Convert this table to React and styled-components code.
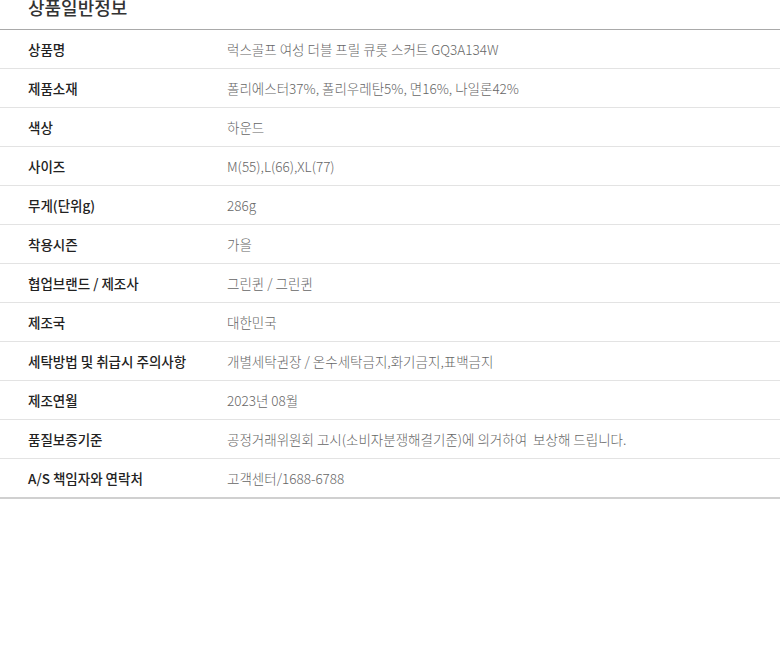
import React from "react"
import styled, { createGlobalStyle } from "styled-components"

const GlobalStyle = createGlobalStyle`
	html, body {
		margin: 0;
		padding: 0;
		background: #fff;
	}
	body {
		font-family: "Noto Sans CJK KR", "Noto Sans", sans-serif;
	}
`

const Wrap = styled.div`
	width: 780px;
	height: 653px;
	overflow: hidden;
	background: #fff;
`

const Title = styled.h3`
	margin: 0;
	height: 29px;
	padding-left: 28px;
	font-size: 18px;
	font-weight: 500;
	line-height: 14px;
	color: #333;
	border-bottom: 1px solid #a9a9a9;
`

const Table = styled.div`
	border-bottom: 2px solid #d0d0d0;
`

const Row = styled.div`
	display: flex;
	align-items: center;
	height: 38px;
	border-top: 1px solid #e3e3e3;
	&:first-child {
		border-top: none;
	}
`

const Label = styled.div`
	width: 199px;
	padding-left: 28px;
	font-size: 13.5px;
	font-weight: 500;
	color: #222;
`

const Value = styled.div`
	flex: 1;
	font-size: 13.5px;
	font-weight: 300;
	color: #666;
	white-space: pre;
`

const rows = [
	["상품명", "럭스골프 여성 더블 프릴 큐롯 스커트 GQ3A134W"],
	["제품소재", "폴리에스터37%, 폴리우레탄5%, 면16%, 나일론42%"],
	["색상", "하운드"],
	["사이즈", "M(55),L(66),XL(77)"],
	["무게(단위g)", "286g"],
	["착용시즌", "가을"],
	["협업브랜드 / 제조사", "그린퀸 / 그린퀸"],
	["제조국", "대한민국"],
	["세탁방법 및 취급시 주의사항", "개별세탁권장 / 온수세탁금지,화기금지,표백금지"],
	["제조연월", "2023년 08월"],
	["품질보증기준", "공정거래위원회 고시(소비자분쟁해결기준)에 의거하여  보상해 드립니다."],
	["A/S 책임자와 연락처", "고객센터/1688-6788"],
]

const App = () => {
	return (
		<>
			<GlobalStyle />
			<Wrap>
				<Title>상품일반정보</Title>
				<Table>
					{rows.map(([label, value]) => (
						<Row key={label}>
							<Label>{label}</Label>
							<Value>{value}</Value>
						</Row>
					))}
				</Table>
			</Wrap>
		</>
	)
}

export default App
